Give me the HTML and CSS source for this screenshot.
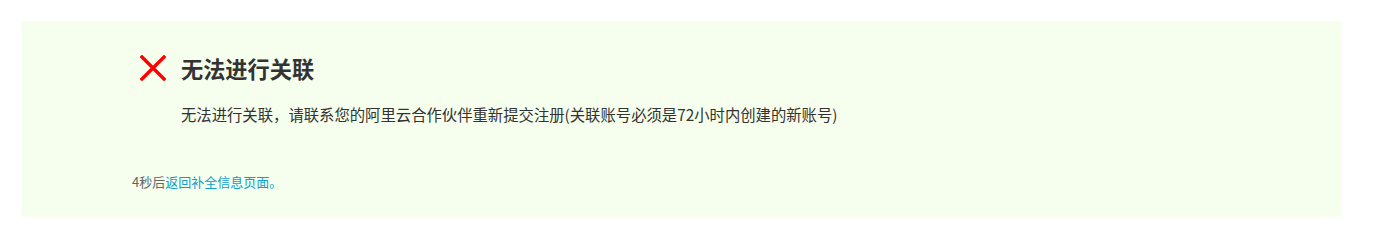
FILE: index.html
```html
<!DOCTYPE html>
<html lang="zh-CN">
<head>
<meta charset="utf-8">
<title>无法进行关联</title>
<link rel="stylesheet" href="styles.css">
</head>
<body>
<div class="box">
  <div class="head">
    <svg class="icon" width="26" height="26" viewBox="0 0 26 26" aria-hidden="true">
      <path d="M2 2 L24 24 M24 2 L2 24" stroke="#ff0000" stroke-width="3.4" stroke-linecap="square" fill="none"/>
    </svg>
    <h1 class="title">无法进行关联</h1>
  </div>
  <p class="desc">无法进行关联，请联系您的阿里云合作伙伴重新提交注册(关联账号必须是72小时内创建的新账号)</p>
  <p class="foot">4秒后<a class="link" href="#">返回补全信息页面。</a></p>
</div>
</body>
</html>
```

FILE: styles.css
```css
html, body {
  margin: 0;
  padding: 0;
  background: #ffffff;
}
body {
  font-family: "Noto Sans CJK SC", "Noto Sans", sans-serif;
  color: #333333;
}
.box {
  margin: 21px 33px 0 22px;
  height: 196px;
  box-sizing: border-box;
  background: #f6ffed;
  padding-top: 30px;
  display: flex;
  flex-direction: column;
}
.head {
  display: flex;
  align-items: center;
  padding-left: 118px;
  height: 34px;
}
.icon {
  display: block;
  flex: none;
}
.title {
  margin: 0 0 0 15px;
  font-size: 22.2px;
  line-height: 34px;
  font-weight: 700;
  color: #333333;
}
.desc {
  margin: 18px 0 0 159px;
  font-size: 15.35px;
  line-height: 22px;
  color: #333333;
}
.foot {
  margin: 47px 0 0 110px;
  font-size: 13px;
  line-height: 20px;
  color: #666666;
}
.link {
  color: #0a9fd0;
  text-decoration: none;
}
```
